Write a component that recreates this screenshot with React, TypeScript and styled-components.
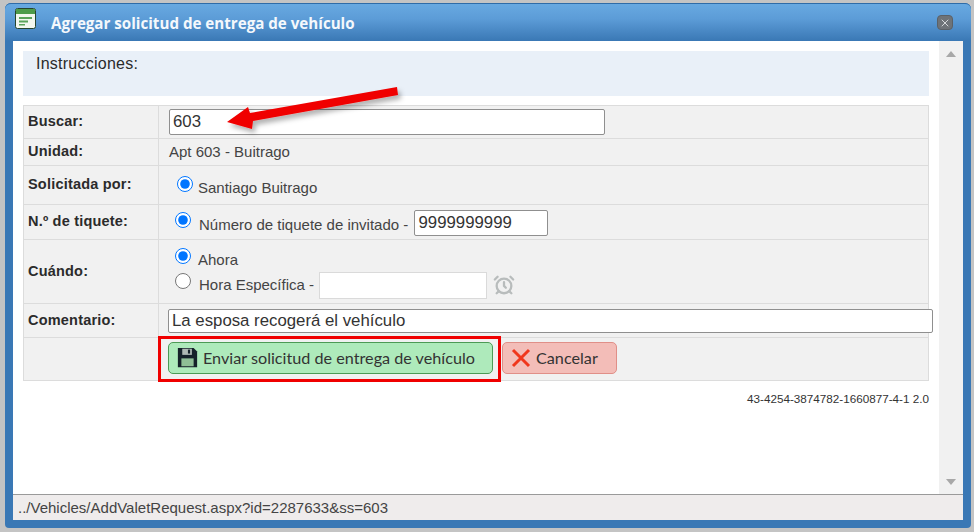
import styled, { createGlobalStyle } from 'styled-components'
import { AlarmClock, X } from 'lucide-react'

const GlobalStyle = createGlobalStyle`
  html, body {
    margin: 0;
    padding: 0;
    background: #c4c4c4;
  }
  body {
    font-family: "Liberation Sans", Arial, sans-serif;
    color: #333;
  }
`

const Page = styled.div`
  position: relative;
  width: 974px;
  height: 532px;
  overflow: hidden;
  padding: 3px 3px 0 5px;
  box-sizing: border-box;
`
const Dialog = styled.div`
  height: 525px;
  box-sizing: border-box;
  display: flex;
  flex-direction: column;
  background: #3a78b5;
  border-radius: 6px 6px 4px 4px;
  padding: 0 8px 8px 8px;
`
const TitleBar = styled.div`
  height: 38px;
  flex: none;
  margin: 0 -8px;
  padding: 0 18px 0 10px;
  display: flex;
  align-items: center;
  border-radius: 6px 6px 0 0;
  background: linear-gradient(#68a9e1, #5c9cd7 40%, #3a78b5);
  border-top: 1px solid #2f6ca8;
  box-sizing: border-box;
`
const TitleIcon = styled.svg`
  width: 21px;
  height: 21px;
  margin-top: -9px;
  flex: none;
`
const Title = styled.div`
  margin-left: 15px;
  flex: 1;
  font-family: "Open Sans", sans-serif;
  font-weight: 700;
  font-size: 15.15px;
  color: #f4f8fc;
`
const CloseButton = styled.div`
  width: 16px;
  height: 15px;
  box-sizing: border-box;
  display: flex;
  align-items: center;
  justify-content: center;
  border-radius: 4px;
  background: #6e7378;
  border: 1px solid #5b6167;
  color: #d5d8da;
`
const Body = styled.div`
  flex: 1;
  min-height: 0;
  display: flex;
  background: #fff;
`
const Content = styled.div`
  flex: 1;
  padding: 10px 10px 0 10px;
`
const Scrollbar = styled.div`
  width: 24px;
  flex: none;
  background: #f1f1f1;
  display: flex;
  flex-direction: column;
  justify-content: space-between;
  align-items: center;
  padding: 10px 0 9px;
  box-sizing: border-box;
`
const ScrollArrow = styled.div<{ $down?: boolean }>`
  width: 0;
  height: 0;
  border-left: 5.5px solid transparent;
  border-right: 5.5px solid transparent;
  ${p => (p.$down ? 'border-top: 6px solid #a8a8a8;' : 'border-bottom: 6px solid #a8a8a8;')}
`
const Instructions = styled.div`
  height: 45px;
  background: #e9f0f8;
  padding: 4px 13px;
  box-sizing: border-box;
  font-size: 16px;
  letter-spacing: 0.25px;
  color: #2b2b2b;
  margin-bottom: 9px;
`
const Table = styled.div`
  border: 1px solid #dcdcdc;
  background: #f1f1f1;
`
const Row = styled.div<{ $height: number }>`
  display: grid;
  grid-template-columns: 135px 1fr;
  height: ${p => p.$height}px;
  border-top: 1px solid #dcdcdc;
  box-sizing: border-box;
  &:first-child {
    border-top: 0;
  }
`
const Label = styled.div`
  border-right: 1px solid #dcdcdc;
  padding: 0 0 2px 4px;
  display: flex;
  align-items: center;
  font-size: 14.5px;
  font-weight: bold;
  color: #2b2b2b;
  letter-spacing: 0.2px;
`
const Cell = styled.div`
  display: flex;
  flex-direction: column;
  justify-content: center;
  padding-left: 9px;
  font-size: 15px;
  color: #444;
  min-width: 0;
`
const PlainValue = styled.div`
  padding: 0 0 2px 1px;
`
const Line = styled.div<{ $indent?: number }>`
  display: flex;
  align-items: center;
  height: 25px;
  padding-left: ${p => p.$indent ?? 0}px;
`
const Caption = styled.span<{ $top?: number }>`
  padding-top: ${p => p.$top ?? 0}px;
  white-space: pre;
`
const Radio = styled.input.attrs({ type: 'radio', readOnly: true })<{ $lift?: number; $gap?: number }>`
  width: 16px;
  height: 16px;
  margin: ${p => -(p.$lift ?? 7)}px ${p => p.$gap ?? 8}px 0 0;
  accent-color: #0075ff;
  flex: none;
`
const TextField = styled.input.attrs({ readOnly: true })<{ $width: number; $height?: number }>`
  width: ${p => p.$width}px;
  height: ${p => p.$height ?? 26}px;
  box-sizing: border-box;
  border: 1px solid #8f8f8f;
  border-radius: 2px;
  background: #fff;
  font-family: "Liberation Sans", Arial, sans-serif;
  font-size: 16.8px;
  color: #333;
  padding: 0 3px;
  outline: none;
`
const SearchField = styled(TextField)`
  margin-left: 1px;
`
const TicketField = styled(TextField)`
  margin: 2px 0 0 2px;
`
const TimeField = styled.input.attrs({ readOnly: true })`
  width: 168px;
  height: 27px;
  box-sizing: border-box;
  border: 1px solid #dadada;
  background: #fff;
  margin: 2px 0 0 5px;
  outline: none;
`
const ClockIcon = styled.span`
  margin: 2px 0 0 6px;
  display: flex;
  color: #b8bcbc;
`
const Actions = styled.div`
  display: flex;
  align-items: center;
  gap: 9px;
  height: 100%;
  padding-bottom: 3px;
  box-sizing: border-box;
`
const Button = styled.div<{ $bg: string; $line: string; $width: number }>`
  width: ${p => p.$width}px;
  height: 32px;
  box-sizing: border-box;
  display: flex;
  align-items: center;
  padding-left: 8px;
  gap: 5px;
  border-radius: 5px;
  background: ${p => p.$bg};
  border: 1px solid ${p => p.$line};
  font-family: Lato, sans-serif;
  font-size: 16.2px;
  color: #333;
`
const Version = styled.div`
  text-align: right;
  font-size: 11.7px;
  color: #333;
  margin-top: 11px;
`
const StatusBar = styled.div`
  height: 25px;
  flex: none;
  border-top: 1px solid #9a9a9a;
  background: #efecec;
  padding-left: 5px;
  display: flex;
  align-items: center;
  font-size: 15px;
  color: #444;
`
const ArrowOverlay = styled.svg`
  position: absolute;
  left: 215px;
  top: 78px;
  width: 200px;
  height: 60px;
  pointer-events: none;
`
const Highlight = styled.div`
  position: absolute;
  left: 158px;
  top: 336px;
  width: 343px;
  height: 46px;
  box-sizing: border-box;
  border: 3px solid #f00000;
  pointer-events: none;
`

export default function App() {
  return (
    <>
      <GlobalStyle />
      <Page>
        <Dialog>
          <TitleBar>
            <TitleIcon viewBox="0 0 21 21">
              <rect x="0.5" y="0.5" width="20" height="20" rx="2" fill="#f2f7ee" stroke="#26452e" />
              <rect x="1" y="1" width="19" height="5" fill="#4d9b4a" />
              <rect x="4" y="9" width="13" height="2" fill="#5aa35a" />
              <rect x="4" y="12.5" width="9" height="2" fill="#5aa35a" />
              <rect x="4" y="16" width="6" height="1.5" fill="#5aa35a" />
            </TitleIcon>
            <Title>Agregar solicitud de entrega de vehículo</Title>
            <CloseButton>
              <X size={12} strokeWidth={2} />
            </CloseButton>
          </TitleBar>
          <Body>
            <Content>
              <Instructions>Instrucciones:</Instructions>
              <Table>
                <Row $height={32}>
                  <Label>Buscar:</Label>
                  <Cell>
                    <SearchField $width={436} defaultValue="603" />
                  </Cell>
                </Row>
                <Row $height={27}>
                  <Label>Unidad:</Label>
                  <Cell>
                    <PlainValue>Apt 603 - Buitrago</PlainValue>
                  </Cell>
                </Row>
                <Row $height={39}>
                  <Label>Solicitada por:</Label>
                  <Cell>
                    <Line $indent={9}>
                      <Radio defaultChecked name="by" $lift={3} $gap={5} />
                      <Caption $top={4}>Santiago Buitrago</Caption>
                    </Line>
                  </Cell>
                </Row>
                <Row $height={35}>
                  <Label>N.º de tiquete:</Label>
                  <Cell>
                    <Line $indent={7}>
                      <Radio defaultChecked name="ticket" $lift={5} />
                      <Caption $top={4}>Número de tiquete de invitado - </Caption>
                      <TicketField $width={134} defaultValue="9999999999" />
                    </Line>
                  </Cell>
                </Row>
                <Row $height={64}>
                  <Label>Cuándo:</Label>
                  <Cell>
                    <Line $indent={7}>
                      <Radio defaultChecked name="when" $gap={7} />
                      <Caption>Ahora</Caption>
                    </Line>
                    <Line $indent={7}>
                      <Radio name="when" />
                      <Caption>Hora Específica -</Caption>
                      <TimeField />
                      <ClockIcon>
                        <AlarmClock size={22} strokeWidth={2.5} />
                      </ClockIcon>
                    </Line>
                  </Cell>
                </Row>
                <Row $height={34}>
                  <Label>Comentario:</Label>
                  <Cell>
                    <TextField $width={765} $height={24} defaultValue="La esposa recogerá el vehículo" />
                  </Cell>
                </Row>
                <Row $height={43}>
                  <Label />
                  <Cell>
                    <Actions>
                      <Button $bg="#aeeabb" $line="#4c9a55" $width={325}>
                        <svg width="21" height="21" viewBox="0 0 24 24">
                          <path d="M1 1h18l4 4v18H1z" fill="#16222a" />
                          <rect x="6" y="2" width="11" height="7" fill="#aeb9b4" />
                          <rect x="12.5" y="3" width="2.5" height="4.5" fill="#16222a" />
                          <rect x="5" y="13" width="14" height="9" fill="#8fbf96" />
                        </svg>
                        Enviar solicitud de entrega de vehículo
                      </Button>
                      <Button $bg="#f3bdb8" $line="#e08f88" $width={115}>
                        <svg width="20" height="20" viewBox="0 0 20 20">
                          <path d="M2 2 L18 18 M18 2 L2 18" stroke="#f0361c" strokeWidth="3" fill="none" />
                        </svg>
                        Cancelar
                      </Button>
                    </Actions>
                  </Cell>
                </Row>
              </Table>
              <Version>43-4254-3874782-1660877-4-1 2.0</Version>
            </Content>
            <Scrollbar>
              <ScrollArrow />
              <ScrollArrow $down />
            </Scrollbar>
          </Body>
          <StatusBar>../Vehicles/AddValetRequest.aspx?id=2287633&amp;ss=603</StatusBar>
        </Dialog>
        <ArrowOverlay viewBox="0 0 200 60">
          <defs>
            <filter id="arrowShadow" x="-10%" y="-30%" width="120%" height="170%">
              <feDropShadow dx="3" dy="4" stdDeviation="2.5" floodColor="#000" floodOpacity="0.3" />
            </filter>
          </defs>
          <path
            d="M182 9 L183 17 L38 43 L37 51 L12 44 L33 29 L35 35 Z"
            fill="#f00000"
            filter="url(#arrowShadow)"
          />
        </ArrowOverlay>
        <Highlight />
      </Page>
    </>
  )
}
